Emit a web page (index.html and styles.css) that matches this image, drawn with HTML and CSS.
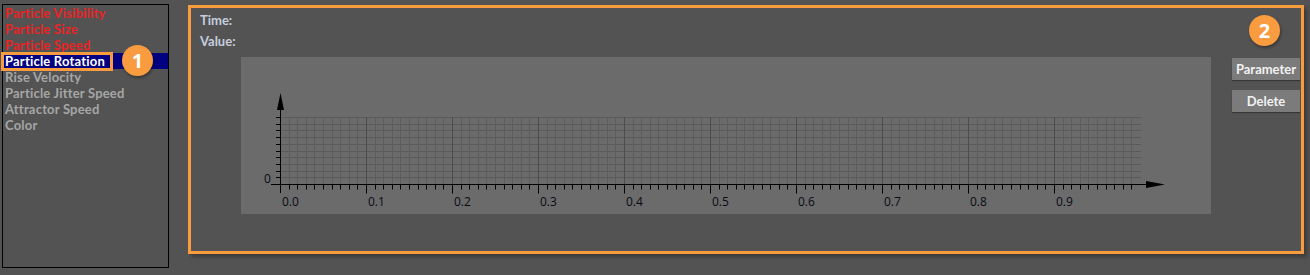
FILE: index.html
```html
<!DOCTYPE html>
<html lang="en">
<head>
    <meta charset="UTF-8">
    <title>Particle Curve Editor</title>
    <link rel="stylesheet" href="styles.css">
</head>
<body>
    <div class="app">
        <div class="param-list">
            <div class="item item-used">Particle Visibility</div>
            <div class="item item-used">Particle Size</div>
            <div class="item item-used">Particle Speed</div>
            <div class="item item-selected">
                <span class="mark">Particle Rotation</span>
                <span class="badge badge-one">1</span>
            </div>
            <div class="item">Rise Velocity</div>
            <div class="item">Particle Jitter Speed</div>
            <div class="item">Attractor Speed</div>
            <div class="item">Color</div>
        </div>

        <div class="editor">
            <div class="info">
                <div>Time:</div>
                <div>Value:</div>
            </div>
            <div class="editor-body">
                <div class="chart">
                    <svg id="graph" width="970" height="157"></svg>
                </div>
                <div class="buttons">
                    <button>Parameter</button>
                    <button>Delete</button>
                </div>
            </div>
            <span class="badge badge-two">2</span>
        </div>
    </div>

    <script>
        const ns = 'http://www.w3.org/2000/svg';
        const svg = document.getElementById('graph');

        function add(tag, attrs, text) {
            const el = document.createElementNS(ns, tag);
            for (const k in attrs) el.setAttribute(k, attrs[k]);
            if (text) el.textContent = text;
            svg.appendChild(el);
            return el;
        }

        const x0 = 39.5, y0 = 127.5, gridTop = 60.5;
        const colStep = 8.6, rowStep = 6.7;
        const px = v => Math.round(v - 0.5) + 0.5;

        // grid
        for (let k = 0; k < 10; k++) {
            const y = px(gridTop + k * rowStep);
            add('line', { x1: x0, y1: y, x2: 900, y2: y, stroke: '#5a5a5a' });
            add('line', { x1: 35, y1: y, x2: x0, y2: y, stroke: '#000' });
        }
        for (let i = 1; i < 100; i++) {
            const x = px(x0 + i * colStep);
            add('line', { x1: x, y1: gridTop, x2: x, y2: y0, stroke: i % 10 === 0 ? '#4c4c4c' : '#5c5c5c' });
        }

        // axes
        add('line', { x1: 30, y1: y0, x2: 908, y2: y0, stroke: '#000' });
        add('polygon', { points: '905,124 924,127.5 905,131', fill: '#000' });
        add('line', { x1: x0, y1: 52, x2: x0, y2: 136, stroke: '#000' });
        add('polygon', { points: '36,53 39.5,36 43,53', fill: '#000' });

        for (let i = 1; i < 100; i++) {
            const x = px(x0 + i * colStep);
            add('line', { x1: x, y1: y0, x2: x, y2: y0 + (i % 10 === 0 ? 9 : 5), stroke: '#000' });
        }

        // labels
        add('text', { x: 23, y: 126, class: 'tick-label' }, '0');
        for (let m = 0; m < 10; m++) {
            add('text', { x: x0 + m * 86 + 1.5, y: 149, class: 'tick-label' }, (m / 10).toFixed(1));
        }
    </script>
</body>
</html>
```

FILE: styles.css
```css
body {
    margin: 0;
    background: #535353;
    font-family: Lato, "Open Sans", sans-serif;
    font-size: 13px;
    font-weight: bold;
}
.app {
    display: flex;
    align-items: flex-start;
    padding: 4px 0 0 2px;
}
.param-list {
    box-sizing: border-box;
    width: 167px;
    height: 264px;
    border: 1px solid #000;
}
.item {
    position: relative;
    height: 16px;
    line-height: 16px;
    padding-left: 2px;
    color: #a6a6a6;
    letter-spacing: 0.2px;
    white-space: nowrap;
}
.item-used {
    color: #ea2424;
}
.item-selected {
    background: #000080;
    color: #fff;
}
.mark {
    position: relative;
    display: inline-block;
}
.mark::after {
    content: "";
    position: absolute;
    left: -4px;
    top: -1px;
    width: 112px;
    height: 19px;
    box-sizing: border-box;
    border: 3px solid #f99b3f;
}
.badge {
    position: absolute;
    width: 31px;
    height: 31px;
    border-radius: 50%;
    background: #f99b3f;
    color: #fff;
    font-family: "Open Sans", sans-serif;
    font-size: 20px;
    line-height: 31px;
    letter-spacing: 0;
    text-align: center;
    box-shadow: 1px 2px 3px rgba(0, 0, 0, 0.35);
}
.badge-one {
    left: 119px;
    top: -8px;
}
.badge-two {
    left: 1058px;
    top: 7px;
}
.editor {
    position: relative;
    box-sizing: border-box;
    width: 1116px;
    height: 249px;
    margin: 1px 0 0 19px;
    border: 3px solid #f99b3f;
    box-shadow: 3px 3px 4px rgba(0, 0, 0, 0.3);
}
.info {
    padding: 2px 0 0 9px;
    line-height: 21px;
    color: #c6cedf;
}
.editor-body {
    display: flex;
    align-items: flex-start;
    margin-top: 5px;
}
.chart {
    margin-left: 50px;
    width: 970px;
    height: 157px;
    background: #6b6b6b;
}
.chart svg {
    display: block;
}
.tick-label {
    font-family: "Open Sans", "Liberation Sans", sans-serif;
    font-size: 12px;
    font-weight: normal;
    fill: #0a0a14;
}
.buttons {
    display: flex;
    flex-direction: column;
    gap: 10px;
    margin: 1px 0 0 21px;
}
button {
    width: 68px;
    height: 22px;
    padding: 0;
    border: none;
    background: #7b7b7b;
    color: #f2f2f2;
    font-family: Lato, "Open Sans", sans-serif;
    font-size: 13px;
    font-weight: bold;
    box-shadow: 0 1px 1px rgba(0, 0, 0, 0.35);
}
```
